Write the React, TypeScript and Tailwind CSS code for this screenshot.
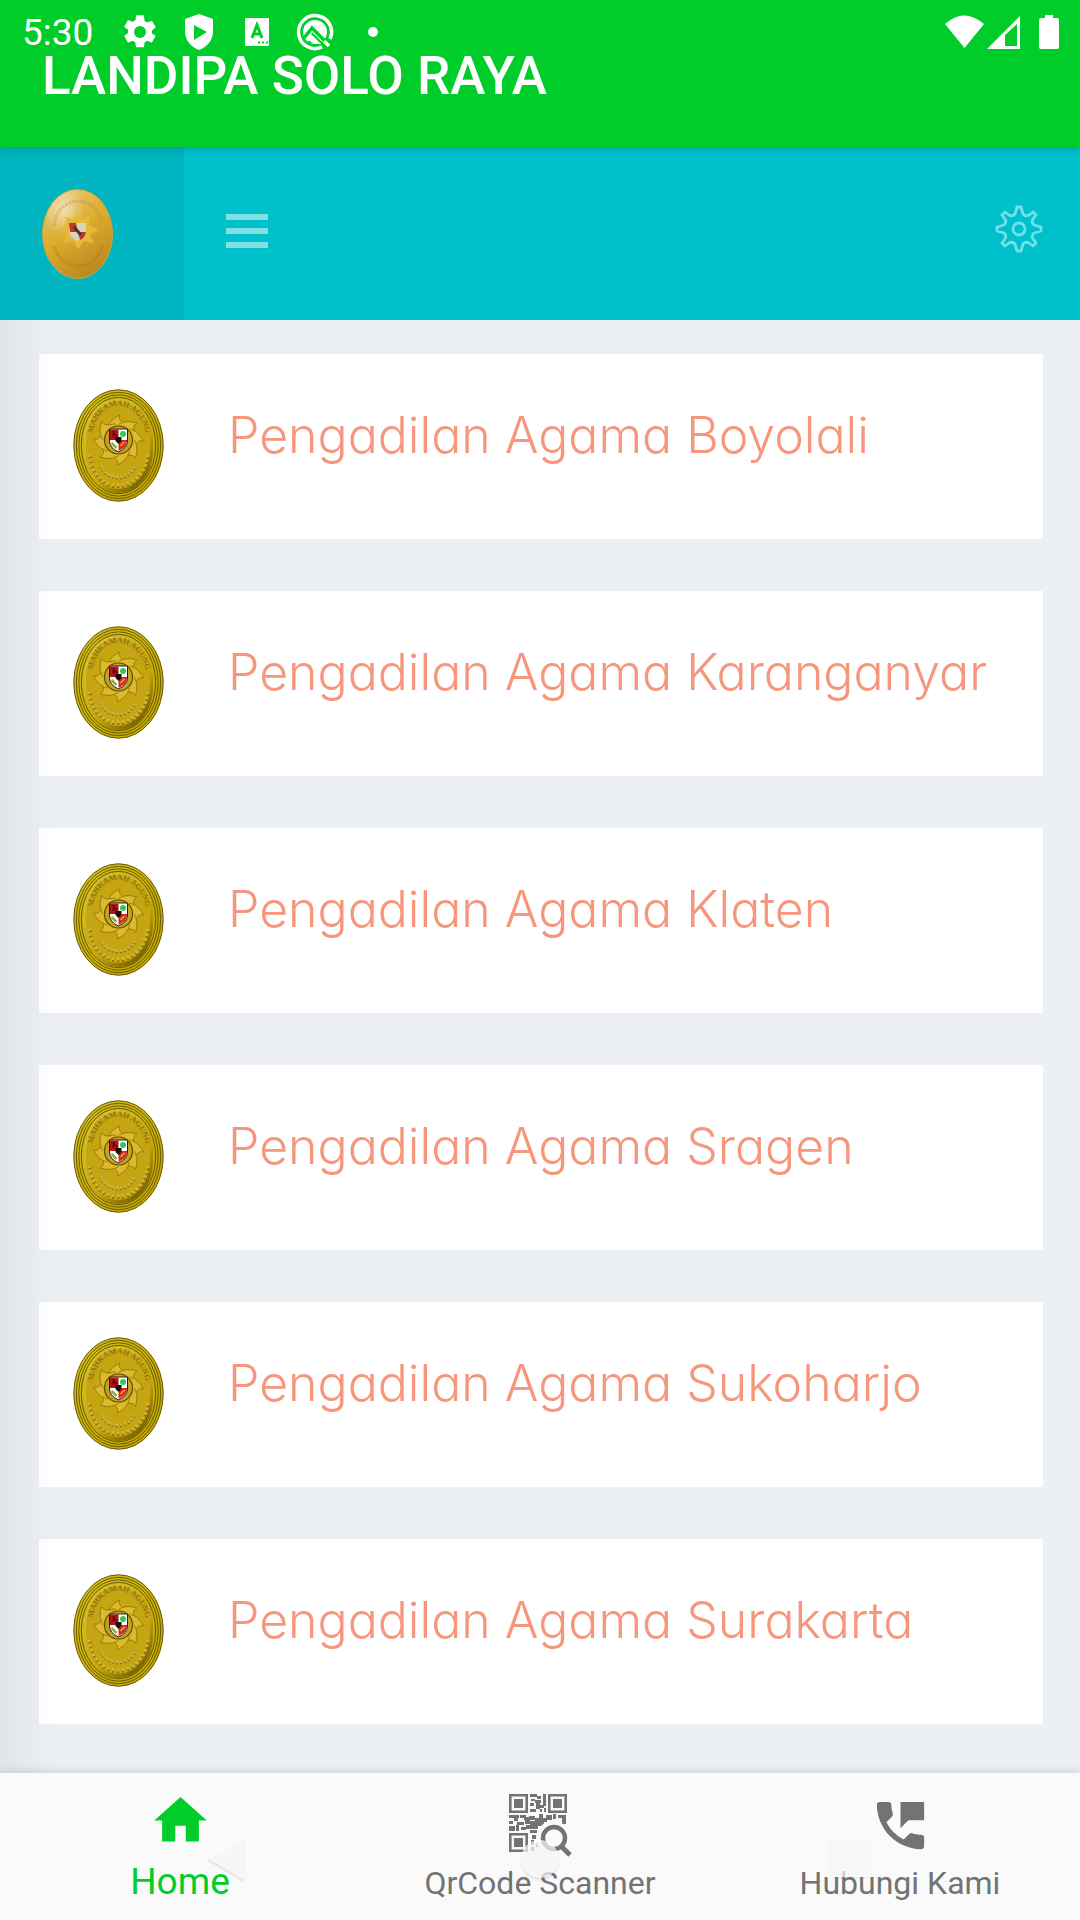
import React from "react";

const courts = ["Boyolali", "Karanganyar", "Klaten", "Sragen", "Sukoharjo", "Surakarta"];

function Emblem() {
  return (
    <svg viewBox="0 0 91 113" className="h-[113px] w-[91px] shrink-0" aria-hidden="true">
      <defs>
        <linearGradient id="medal" x1="0" y1="0" x2="1" y2="1">
          <stop offset="0" stopColor="#d6c21c" />
          <stop offset="0.5" stopColor="#cbb00c" />
          <stop offset="1" stopColor="#c0a500" />
        </linearGradient>
        <linearGradient id="face" x1="0.2" y1="0" x2="0.9" y2="1">
          <stop offset="0" stopColor="#d9c33a" />
          <stop offset="0.6" stopColor="#c6a60a" />
          <stop offset="1" stopColor="#5f4d00" />
        </linearGradient>
        <path id="arc" d="M19 54C19 4 72 4 74 56" />
      </defs>
      <ellipse cx="45.5" cy="56.5" rx="45" ry="56" fill="url(#medal)" />
      <g fill="none" stroke="#4f4400" strokeWidth="0.8">
        <ellipse cx="45.5" cy="56.5" rx="44.7" ry="55.7" />
        <ellipse cx="45.5" cy="56.5" rx="42.2" ry="53.2" />
        <ellipse cx="45.5" cy="56.5" rx="39.7" ry="50.7" />
        <ellipse cx="45.5" cy="56.5" rx="37.2" ry="48.2" />
      </g>
      <rect x="11" y="10" width="69" height="94" rx="34" ry="42" fill="url(#face)" />
      <rect x="13" y="12" width="64" height="88" rx="32" ry="40" fill="#c5a511" />
      <text fontFamily="Liberation Serif, serif" fontSize="8" fontWeight="700" fill="#8d7510">
        <textPath href="#arc" startOffset="10">MAHKAMAH AGUNG</textPath>
      </text>
      <g transform="translate(45.5 51)">
        {[0, 45, 90, 135, 180, 225, 270, 315].map((a) => (
          <path
            key={a}
            d="M-11-11C-9-18-6-21 1-25C0-21 2-18 9-14L8-9Z"
            transform={`rotate(${a})`}
            fill="#dcba2c"
            stroke="#8c7008"
            strokeWidth="0.8"
          />
        ))}
        <circle r="15.5" fill="#d8b425" />
        <circle r="14" fill="#c3a322" stroke="#5e4d04" strokeWidth="1.2" />
        <path d="M-9-11H9V1Q9 8 0 12Q-9 8-9 1Z" fill="#fff" stroke="#222" strokeWidth="1" />
        <path d="M-8.5-10.5H0V0H-8.5Z" fill="#b3141c" />
        <path d="M0 0H8.5V1Q8.5 7 0 11Z" fill="#d72b1b" />
        <circle cx="4.5" cy="-6" r="3" fill="#35c94a" />
        <path d="M-7 3L-2 8" stroke="#92ad45" strokeWidth="2.5" />
        <path d="M2 6L6 2" stroke="#efb63b" strokeWidth="1.2" />
        <path d="M-5-9V-3M-5-7L-1-4" stroke="#4b0b0b" strokeWidth="1.5" />
        <path d="M-3-3H3V1L0 4L-3 1Z" fill="#15110a" />
      </g>
      <g fill="none">
        <path d="M17 67C20 108 70 108 76 66" strokeWidth="3" strokeDasharray="2 3" stroke="#8c7108" />
        <path d="M16 66C20 106 70 106 75 65" strokeWidth="3" strokeDasharray="2 3" stroke="#d2b840" />
        <path d="M28 77Q32 88 45 89Q58 88 62 77" strokeWidth="3" strokeDasharray="2 2" stroke="#8c7108" />
        <path d="M28 76Q32 87 45 88Q58 87 62 76" strokeWidth="2.5" strokeDasharray="3 1" stroke="#cdb240" />
      </g>
    </svg>
  );
}

function SmallEmblem() {
  return (
    <svg viewBox="0 0 71 90" className="h-[90px] w-[71px]" aria-hidden="true">
      <defs>
        <linearGradient id="gold" x1="0.2" y1="0" x2="0.7" y2="1">
          <stop offset="0" stopColor="#e6c878" />
          <stop offset="0.45" stopColor="#dcae2e" />
          <stop offset="1" stopColor="#bb8420" />
        </linearGradient>
        <radialGradient id="shine" cx="0.3" cy="0.22" r="0.3">
          <stop offset="0" stopColor="#f3dfb0" />
          <stop offset="1" stopColor="#f3dfb0" stopOpacity="0" />
        </radialGradient>
      </defs>
      <ellipse cx="35.5" cy="45" rx="35" ry="44.5" fill="url(#gold)" stroke="#d3a637" />
      <ellipse cx="35.5" cy="45" rx="35" ry="44.5" fill="url(#shine)" />
      <path d="M12 37C15 7 51 3 60 32" fill="none" stroke="#b9924a" strokeOpacity="0.4" strokeWidth="3" strokeDasharray="3 1" />
      <path d="M12 57C20 84 54 84 61 55" fill="none" stroke="#9f7419" strokeOpacity="0.25" strokeWidth="3" />
      <path d="M35 23L39 31L48 27L47 36L56 41L48 46L52 54L42 52L36 60L31 52L22 54L24 46L17 40L25 35L23 28L32 30Z" fill="#e5ba3b" />
      <path d="M27 34H44V43Q43 49 36 52Q28 49 27 43Z" fill="#d8d5ba" />
      <path d="M27 34H34L36 43H28ZM36 43H44Q43 49 38 51Z" fill="#bd3a27" />
      <path d="M32 38L39 46" stroke="#49352b" strokeWidth="3" />
    </svg>
  );
}

function StatusBar() {
  return (
    <div className="absolute inset-x-0 top-0 flex h-16 items-center justify-between pr-[21px] pl-[22px]">
      <div className="flex items-center">
        <span className="w-[98px] pt-0.5 text-[37px] leading-[64px]">5:30</span>
        <svg viewBox="0 0 24 24" className="h-10 w-10" fill="currentColor" aria-hidden="true">
          <path d="M19.14 12.94c.04-.3.06-.61.06-.94s-.02-.64-.07-.94l2.03-1.58a.49.49 0 0 0 .12-.61l-1.92-3.32a.49.49 0 0 0-.59-.22l-2.39.96a7 7 0 0 0-1.62-.94l-.36-2.54A.48.48 0 0 0 13.92 2h-3.84a.48.48 0 0 0-.48.41l-.36 2.54c-.59.24-1.13.57-1.62.94l-2.39-.96a.49.49 0 0 0-.59.22L2.72 8.47c-.12.21-.08.47.12.61l2.03 1.58c-.05.3-.09.63-.09.94s.02.64.07.94l-2.03 1.58a.49.49 0 0 0-.12.61l1.92 3.32c.12.22.37.29.59.22l2.39-.96c.5.38 1.03.7 1.62.94l.36 2.54c.05.24.24.41.48.41h3.84c.24 0 .44-.17.47-.41l.36-2.54c.59-.24 1.13-.56 1.62-.94l2.39.96c.22.08.47 0 .59-.22l1.92-3.32a.48.48 0 0 0-.12-.61zM12 15.6A3.6 3.6 0 1 1 12 8.4a3.6 3.6 0 0 1 0 7.2z" />
        </svg>
        <svg viewBox="0 0 30 38" className="ml-6 h-[38px] w-[30px]" aria-hidden="true">
          <path d="M15 1L29 6V18Q29 31 15 37Q1 31 1 18V6Z" fill="currentColor" />
          <path d="M10 12V27L23 19Z" fill="#00cd2a" />
        </svg>
        <svg viewBox="0 0 24 28" className="ml-[31px] h-7 w-6" aria-hidden="true">
          <rect width="24" height="28" rx="1" fill="currentColor" />
          <path d="M7 20L12 7L17 20M9 16H15" fill="none" stroke="#00cd2a" strokeWidth="3" />
          <path d="M13 24.5H24" stroke="#00cd2a" strokeWidth="2" strokeDasharray="2 2" />
        </svg>
        <svg viewBox="0 0 38 38" className="ml-[27px] h-[38px] w-[38px]" fill="none" stroke="currentColor" aria-hidden="true">
          <path d="M26 34A16.5 16.5 0 1 1 34 26" strokeWidth="3.5" />
          <circle cx="19" cy="19" r="12" fill="currentColor" stroke="none" />
          <path d="M8 25L16 15L34 33" stroke="#00cd2a" strokeWidth="3.5" />
          <path d="M28 28L33 33" strokeWidth="3.5" />
          <path d="M16 19L27 30H12Z" fill="#00cd2a" stroke="none" />
          <path d="M15 21L25 31Q16 32 11 25Z" fill="currentColor" stroke="none" />
        </svg>
        <span className="ml-[34px] h-[10px] w-[10px] rounded-full bg-white" />
      </div>
      <div className="flex items-center text-white">
        <svg viewBox="0 0 39 34" className="h-[34px] w-[39px]" fill="currentColor" aria-hidden="true">
          <path d="M0 9Q19-8 39 9L19.5 33Z" />
        </svg>
        <svg viewBox="0 0 33 33" className="ml-[3px] h-[33px] w-[33px]" aria-hidden="true">
          <path d="M33 0V33H0Z" fill="currentColor" />
          <path d="M30 8V30H18V19Z" fill="#00cd2a" />
        </svg>
        <svg viewBox="0 0 20 34" className="ml-[19px] h-[34px] w-5" fill="currentColor" aria-hidden="true">
          <path d="M6 0H14V3H18Q20 3 20 5V32Q20 34 18 34H2Q0 34 0 32V5Q0 3 2 3H6Z" />
        </svg>
      </div>
    </div>
  );
}

function QrIcon() {
  return (
    <svg viewBox="0 0 63 63" className="h-[63px] w-[63px]" aria-hidden="true">
      <g fill="none" stroke="currentColor" strokeWidth="2.6">
        <path d="M1.3 1.3H17.7V17.7H1.3ZM40.3 1.3H56.7V17.7H40.3ZM1.3 40.3H17.7V56.7H1.3Z" />
      </g>
      <g fill="currentColor">
        <path d="M5 5h9v9H5zM44 5h9v9h-9zM5 44h9v9H5z" />
        <path d="M21 0h7v3h-7zM28 2h4v3h-4zM34 0h3v12h-3zM22 5h4v2h-4zM26 6h6v3h-6zM21 9h4v3h-4zM27 9h4v6h-4zM30 11h5v3h-5zM21 15h6v3h-6zM31 15h2v3h-2zM35 14h2v4h-2z" />
        <path d="M0 21h10v3H0zM5 23h4v4H5zM11 21h6v3h-6zM15 23h5v3h-5zM20 22h6v4h-6zM26 24h12v4H26zM30 20h4v5h-4zM37 21h6v5h-6zM44 20h3v5h-3zM49 21h8v3h-8zM53 24h4v6h-4zM0 27h4v3H0zM8 28h7v3H8zM16 26h5v4h-5zM21 27h14v5H21zM0 32h6v5H0zM7 31h3v6H7zM12 33h5v3h-5zM17 31h12v4H17zM21 36h7v3h-7zM23 41h5v4h-5zM22 46h3v5h-3zM22 53h3v4h-3zM27 49h4v4h-4z" />
      </g>
      <circle cx="44" cy="44" r="17" fill="#fafafa" />
      <circle cx="45" cy="44" r="11" fill="none" stroke="currentColor" strokeWidth="4.5" />
      <path d="M51 51L61 61" stroke="currentColor" strokeWidth="5" />
    </svg>
  );
}

function NavGhosts() {
  return (
    <div className="pointer-events-none absolute inset-x-0 top-[60px] grid grid-cols-3 text-white/70">
      <svg viewBox="0 0 360 54" className="w-full drop-shadow-[0_2px_1px_rgba(0,0,0,0.15)]" fill="currentColor" aria-hidden="true">
        <path d="M207 25L242 4Q244 3 244 5V45Q244 47 242 46Z" />
      </svg>
      <svg viewBox="0 0 360 54" className="w-full drop-shadow-[0_2px_1px_rgba(0,0,0,0.15)]" fill="currentColor" aria-hidden="true">
        <circle cx="180" cy="26" r="19" />
      </svg>
      <svg viewBox="0 0 360 54" className="w-full drop-shadow-[0_1px_1px_rgba(0,0,0,0.12)]" fill="currentColor" aria-hidden="true">
        <rect x="111" y="5" width="39" height="39" rx="2" />
      </svg>
    </div>
  );
}

export default function App() {
  return (
    <div className="flex min-h-screen flex-col bg-[#eceff4] font-[Roboto,sans-serif]">
      <header className="relative z-10 bg-[#00cd2a] pt-[44px] pb-[39px] pl-[42px] text-white shadow-[0_2px_8px_rgba(0,0,0,0.18)]">
        <StatusBar />
        <h1 className="text-[53px] leading-[64px] font-medium">LANDIPA SOLO RAYA</h1>
      </header>

      <div className="flex h-[173px] bg-[#00c1cb]">
        <a href="#home" aria-label="Beranda" className="flex w-[184px] items-center bg-[#00b5bf] pl-[42px]">
          <SmallEmblem />
        </a>
        <div className="flex flex-1 items-center justify-between pr-[37px] pl-[42px]">
          <button type="button" aria-label="Menu" className="flex w-[42px] flex-col gap-2 pb-1.5">
            <span className="h-1.5 w-full bg-[#80e0e5]" />
            <span className="h-1.5 w-full bg-[#80e0e5]" />
            <span className="h-1.5 w-full bg-[#80e0e5]" />
          </button>
          <button type="button" aria-label="Pengaturan" className="pb-2.5 text-[#72e0e6]">
            <svg viewBox="-24 -24 48 48" className="h-12 w-12" fill="none" stroke="currentColor" strokeWidth="2.8" strokeLinejoin="round" aria-hidden="true">
              <path d="M-2-22H2L4-15Q7-12 10-14L14-17L17-14L14-10Q12-7 15-4L22-2V2L15 4Q12 7 14 10L17 14L14 17L10 14Q7 12 4 15L2 22H-2L-4 15Q-7 12-10 14L-14 17L-17 14L-14 10Q-12 7-15 4L-22 2V-2L-15-4Q-12-7-14-10L-17-14L-14-17L-10-14Q-7-12-4-15Z" />
              <circle r="6" />
            </svg>
          </button>
        </div>
      </div>

      <main className="relative flex-1 px-[37px] pt-[34px] pl-[39px]">
        <ul className="flex flex-col gap-[52px]">
          {courts.map((name) => (
            <li key={name}>
              <a href="#court" className="flex h-[185px] items-start bg-white pt-[35px] pl-[34px] text-[#f6967c]">
                <Emblem />
                <span className="pt-3 pl-16 font-[Inter,sans-serif] text-[50px] leading-[68px] font-light whitespace-nowrap [font-feature-settings:'cv11']">
                  Pengadilan Agama {name}
                </span>
              </a>
            </li>
          ))}
        </ul>
        <div className="pointer-events-none absolute inset-y-0 left-0 w-14 bg-linear-to-r from-[#38443c]/6 to-transparent" />
      </main>

      <nav className="relative grid h-[147px] grid-cols-3 bg-[#fafafa] text-[#737373] shadow-[0_-2px_8px_rgba(0,0,0,0.12)]">
        <a href="#home" className="flex flex-col items-center pt-4 text-[#00cd2a]">
          <svg viewBox="0 0 24 24" className="h-[63px] w-[63px]" fill="currentColor" aria-hidden="true">
            <path d="M10 20v-6h4v6h5v-8h3L12 3 2 12h3v8z" />
          </svg>
          <span className="text-[37px] leading-[60px]">Home</span>
        </a>
        <a href="#scan" className="flex flex-col items-center pt-[21px]">
          <QrIcon />
          <span className="text-[32px] leading-[52px]">QrCode Scanner</span>
        </a>
        <a href="#contact" className="flex flex-col items-center pt-[21px]">
          <svg viewBox="0 0 24 24" className="h-[63px] w-[63px]" fill="currentColor" aria-hidden="true">
            <path d="M20 15.5c-1.25 0-2.45-.2-3.57-.57a1.02 1.02 0 0 0-1.02.24l-2.2 2.2a15.07 15.07 0 0 1-6.59-6.58l2.2-2.21c.28-.27.36-.66.25-1.01A11.36 11.36 0 0 1 8.5 4c0-.55-.45-1-1-1H4c-.55 0-1 .45-1 1 0 9.39 7.61 17 17 17 .55 0 1-.45 1-1v-3.5c0-.55-.45-1-1-1zM12 3v10l3-3h6V3h-9z" />
          </svg>
          <span className="text-[32px] leading-[52px]">Hubungi Kami</span>
        </a>
        <NavGhosts />
      </nav>
    </div>
  );
}
